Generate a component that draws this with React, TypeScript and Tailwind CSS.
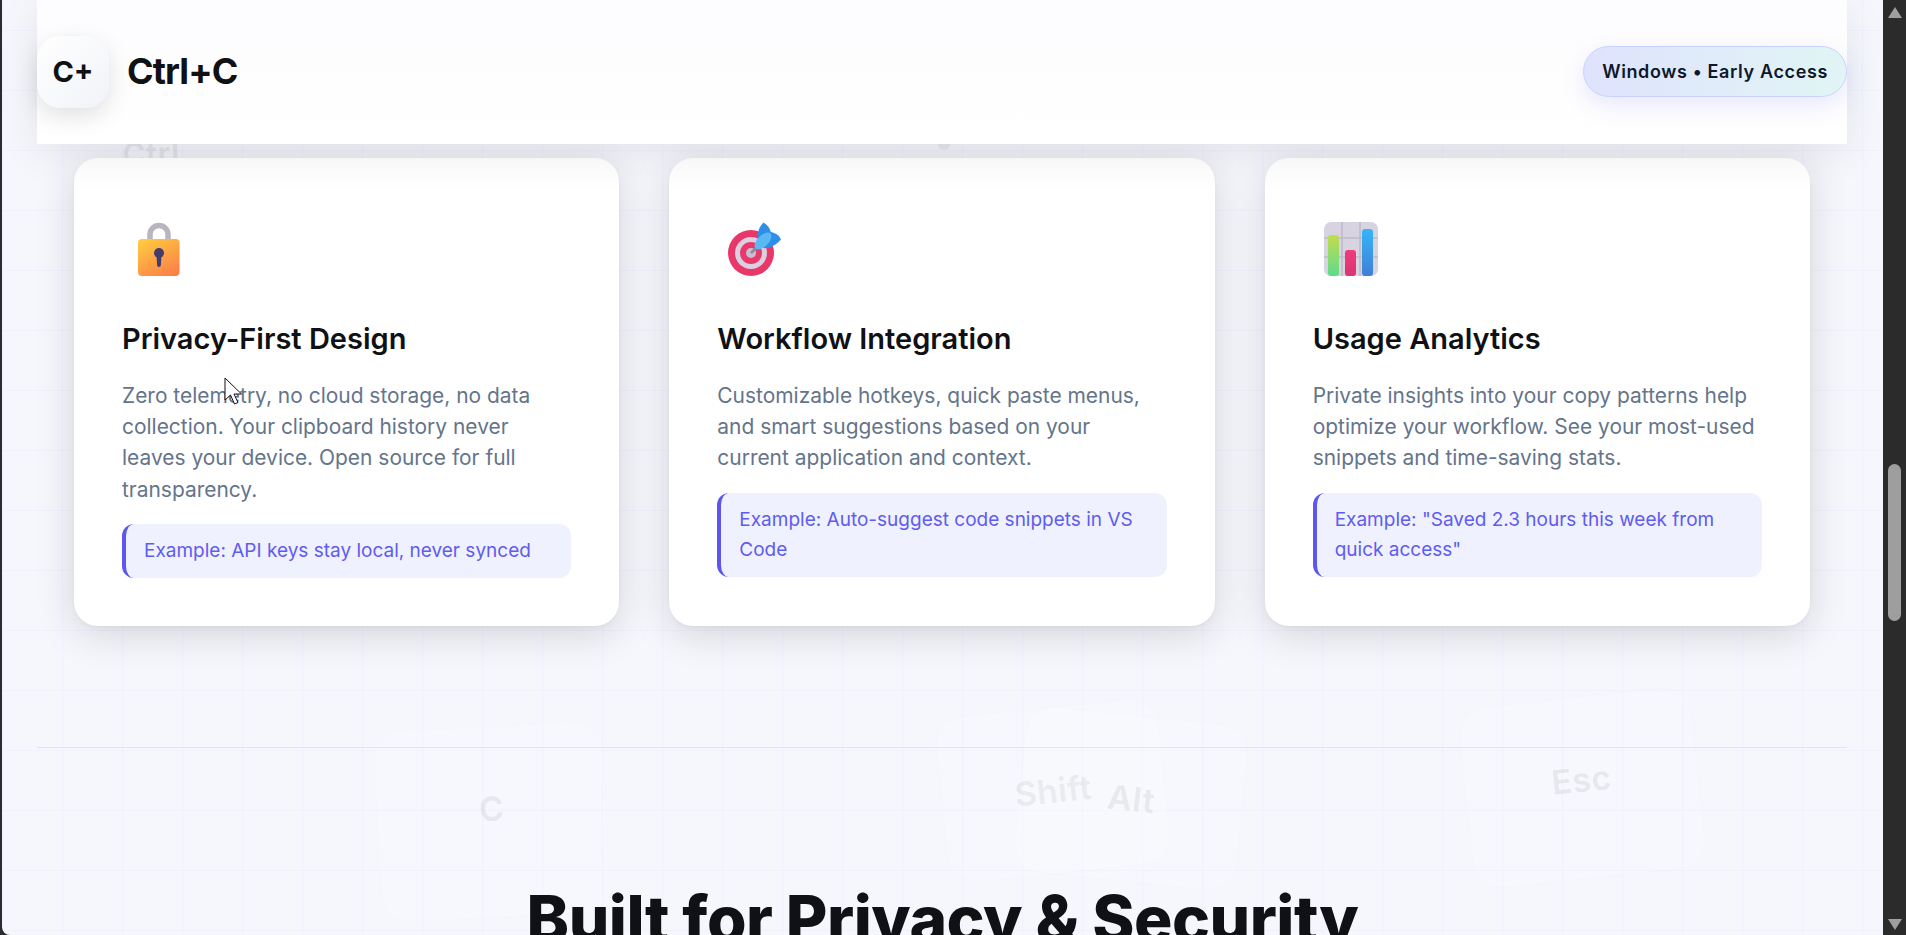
import { useId } from 'react';

const features = [
  {
    icon: 'lock',
    title: 'Privacy-First Design',
    text: 'Zero telemetry, no cloud storage, no data collection. Your clipboard history never leaves your device. Open source for full transparency.',
    example: 'Example: API keys stay local, never synced',
  },
  {
    icon: 'target',
    title: 'Workflow Integration',
    text: 'Customizable hotkeys, quick paste menus, and smart suggestions based on your current application and context.',
    example: 'Example: Auto-suggest code snippets in VS Code',
  },
  {
    icon: 'chart',
    title: 'Usage Analytics',
    text: 'Private insights into your copy patterns help optimize your workflow. See your most-used snippets and time-saving stats.',
    example: 'Example: "Saved 2.3 hours this week from quick access"',
  },
];

const LockIcon = () => {
  const id = useId();
  return (
    <svg className="blur-[0.4px]" width="66" height="64" viewBox="0 0 66 64">
      <defs>
        <linearGradient id={id} x1="0.2" y1="0" x2="0.8" y2="1">
          <stop offset="0" stopColor="#ffc940" />
          <stop offset="1" stopColor="#fb7f48" />
        </linearGradient>
      </defs>
      <path d="M28 24V16.5a9 9 0 0 1 18 0V24" fill="none" stroke="#b9b4bf" strokeWidth="5.5" />
      <rect x="16" y="21" width="41.5" height="37" rx="4" fill={`url(#${id})`} />
      <circle cx="37" cy="35" r="5" fill="#433b6b" />
      <path d="M34.5 37h5l-0.6 10a1.9 1.9 0 0 1-3.8 0z" fill="#433b6b" />
    </svg>
  );
};

const TargetIcon = () => (
  <svg className="blur-[0.4px]" width="66" height="64" viewBox="0 0 66 64">
    <circle cx="34" cy="35" r="23" fill="#e8386a" />
    <circle cx="34" cy="35" r="16" fill="#dccfe0" />
    <circle cx="34" cy="35" r="11" fill="#e9386c" />
    <circle cx="34" cy="35" r="5" fill="#c9bfd0" />
    <path d="M34 35L42 27" stroke="#8d8a99" strokeWidth="2.5" />
    <path d="M41 21C40 13 43 8 46.5 4.5C50.5 7 53 10 54 15Z" fill="#2f8fe8" />
    <path d="M46 30C52 31 59 27 64 21.5C62 17 58 14.5 53 14Z" fill="#2f8fe8" />
    <ellipse cx="46" cy="23" rx="10.5" ry="5.5" transform="rotate(-45 46 23)" fill="#5ab8f5" />
  </svg>
);

const ChartIcon = () => {
  const id = useId();
  return (
    <svg className="blur-[0.4px]" width="66" height="64" viewBox="0 0 66 64">
      <defs>
        <linearGradient id={`${id}g`} x1="0" y1="0" x2="0" y2="1">
          <stop offset="0" stopColor="#c2dd4d" />
          <stop offset="1" stopColor="#5edb8d" />
        </linearGradient>
        <linearGradient id={`${id}p`} x1="0" y1="0" x2="0" y2="1">
          <stop offset="0" stopColor="#ef3c7b" />
          <stop offset="1" stopColor="#dc3370" />
        </linearGradient>
        <linearGradient id={`${id}b`} x1="0" y1="0" x2="0" y2="1">
          <stop offset="0" stopColor="#36b5f8" />
          <stop offset="1" stopColor="#3f7fd8" />
        </linearGradient>
      </defs>
      <rect x="11" y="4" width="54" height="54" rx="7" fill="#d8d3e0" />
      <path d="M29 4V58M47 4V58M11 20H65M11 39H65" stroke="#c0bbca" strokeWidth="1.6" />
      <rect x="15" y="17" width="11" height="41" rx="3" fill={`url(#${id}g)`} />
      <rect x="32" y="32" width="11" height="26" rx="3" fill={`url(#${id}p)`} />
      <rect x="49" y="11" width="11" height="47" rx="3" fill={`url(#${id}b)`} />
    </svg>
  );
};

const icons: Record<string, () => React.ReactElement> = {
  lock: LockIcon,
  target: TargetIcon,
  chart: ChartIcon,
};

const Scrollbar = () => (
  <div className="relative w-[23px] shrink-0 bg-[#2b2b2b]">
    <div className="absolute left-[5px] top-[7px] h-0 w-0 border-x-[7px] border-b-[11px] border-x-transparent border-b-[#9e9e9e]" />
    <div className="absolute left-[5px] top-[464px] h-[157px] w-[13px] rounded-full bg-[#9e9e9e]" />
    <div className="absolute left-[5px] top-[919px] h-0 w-0 border-x-[7px] border-t-[11px] border-x-transparent border-t-[#9e9e9e]" />
  </div>
);

const FeatureCard = ({ icon, title, text, example }: (typeof features)[number]) => {
  const Icon = icons[icon];
  return (
    <div className="flex flex-col rounded-[24px] bg-white p-12 shadow-[0_2px_4px_rgba(0,0,0,0.03),0_8px_40px_rgba(0,0,0,0.14)]">
      <div className="h-[113px] pt-3">
        <Icon />
      </div>
      <h3 className="text-[29px] font-semibold leading-10 text-[#0f1115]">{title}</h3>
      <p className="mt-[21px] text-[20.95px] leading-[31.2px] text-[#64748b]">{text}</p>
      <div className="mt-[19px] rounded-xl border-l-4 border-[#5b57f0] bg-[#eff1fe] py-3 pl-[18px] pr-4 text-[19px] leading-[30.4px] text-[#5f5cf0]">
        {example}
      </div>
    </div>
  );
};

export default function App() {
  return (
    <div className="flex h-[935px] overflow-hidden bg-[#2b2b30] font-['Inter',sans-serif]">
      <div className="relative ml-[2px] min-w-0 flex-1 overflow-hidden rounded-bl-lg bg-[#f5f7fd] bg-[linear-gradient(rgba(99,102,241,0.035)_1px,transparent_1px),linear-gradient(90deg,rgba(99,102,241,0.035)_1px,transparent_1px)] bg-[size:60px_60px] bg-[position:0_30px]">
        {/* floating keys behind the content */}
        <span className="absolute left-[120px] top-[130px] -rotate-2 text-[32px] font-bold text-black/[0.06]">Ctrl</span>
        <span className="absolute left-[936px] top-[132px] h-[18px] w-3 rounded-full bg-black/[0.05]" />
        <div className="absolute left-[376px] top-[727px] flex h-[190px] w-[228px] -rotate-3 items-center justify-center rounded-[28px] bg-white/15 text-[34px] font-bold text-black/[0.06] shadow-[0_0_6px_rgba(0,0,0,0.01)]">
          <span className="-translate-y-[14px]">C</span>
        </div>
        <div className="absolute left-[940px] top-[708px] flex h-[165px] w-[222px] -rotate-6 items-center justify-center rounded-[28px] bg-white/15 text-[34px] font-bold text-black/[0.06] shadow-[0_0_6px_rgba(0,0,0,0.01)]">
          Shift
        </div>
        <div className="absolute left-[1018px] top-[716px] flex h-[165px] w-[222px] rotate-6 items-center justify-center rounded-[28px] bg-white/15 text-[34px] font-bold text-black/[0.06] shadow-[0_0_6px_rgba(0,0,0,0.01)]">
          Alt
        </div>
        <div className="absolute left-[1464px] top-[698px] flex h-[180px] w-[232px] -rotate-6 items-center justify-center rounded-[28px] bg-white/15 text-[34px] font-bold text-black/[0.06] shadow-[0_0_6px_rgba(0,0,0,0.01)]">
          <span className="-translate-y-[9px]">Esc</span>
        </div>

        <div className="relative">
          <header className="relative z-10 ml-[35px] mr-[36px] flex h-[144px] items-center justify-between bg-gradient-to-b from-[#fdfcfe] to-white shadow-[0_10px_40px_rgba(0,0,0,0.08)]">
            <div className="flex items-center gap-[18px]">
              <div className="flex h-[72px] w-[72px] items-center justify-center rounded-[24px] bg-gradient-to-br from-white to-[#f1f3f8] text-[29px] font-bold text-[#0f1115] shadow-[0_8px_24px_rgba(0,0,0,0.12)]">
                C+
              </div>
              <span className="pb-[2px] text-[36px] font-bold tracking-[-0.025em] text-[#0f1115]">Ctrl+C</span>
            </div>
            <div className="mb-[2px] rounded-full border border-[#c7d2fe] bg-gradient-to-r from-[#dfe3fd] to-[#e1f5f5] px-[18px] py-[11px] text-[18px] font-semibold tracking-[0.035em] text-[#0f172a] shadow-[0_8px_24px_rgba(99,102,241,0.15)]">
              Windows • Early Access
            </div>
          </header>

          <section className="ml-[72px] mr-[73px] mt-[14px] grid grid-cols-3 gap-[50px]">
            {features.map((feature) => (
              <FeatureCard key={feature.title} {...feature} />
            ))}
          </section>

          <div className="ml-[35px] mr-[36px] mt-[121px] h-px bg-[#e3e5ec]" />

          <h2 className="mt-[132px] text-center text-[64px] font-extrabold leading-[77px] tracking-[-0.008em] text-[#0f1115]">
            Built for Privacy &amp; Security
          </h2>
        </div>

        {/* mouse pointer caught in the shot */}
        <svg className="absolute left-[220px] top-[377px] z-20" width="24" height="30" viewBox="0 0 24 30">
          <path d="M3 1V23L8.5 18L12.5 27L16 25.5L12 17H19.5Z" fill="#fff" stroke="#111" strokeWidth="1" />
        </svg>
      </div>
      <Scrollbar />
    </div>
  );
}
